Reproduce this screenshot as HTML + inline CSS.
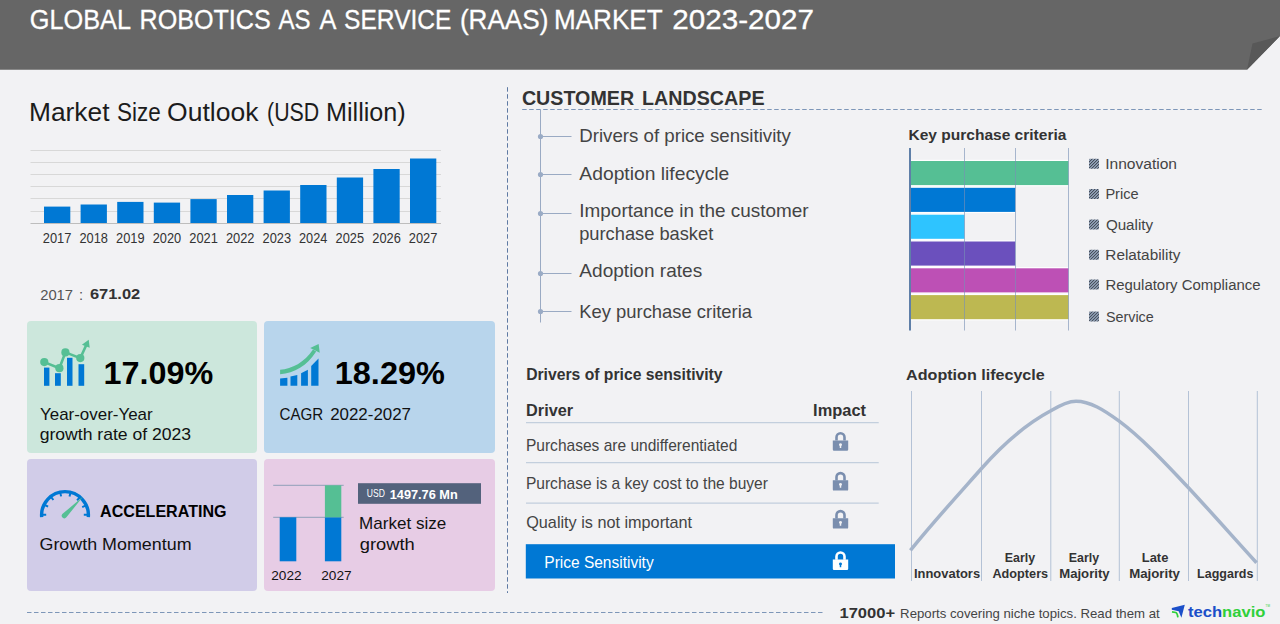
<!DOCTYPE html>
<html lang="en">
<head>
<meta charset="utf-8">
<title>Global Robotics as a Service (RaaS) Market 2023-2027</title>
<style>
html,body{margin:0;padding:0;background:#f2f2f4;}
body{width:1280px;height:624px;overflow:hidden;font-family:"Liberation Sans",Arial,sans-serif;}
svg{display:block;font-family:"Liberation Sans",Arial,sans-serif;}
text{white-space:pre;}
</style>
</head>
<body>
<svg width="1280" height="624" viewBox="0 0 1280 624">
<defs>
<pattern id="hatch" width="2.12" height="2.12" patternUnits="userSpaceOnUse" patternTransform="rotate(-45)">
<rect width="2.12" height="2.12" fill="#bccfea"/><rect width="2.12" height="1.15" fill="#363d47"/>
</pattern>
</defs>

<rect width="1280" height="624" fill="#f2f2f4"/>
<!-- header band -->
<path d="M0 0H1280V36L1247 69.8H0z" fill="#666"/>
<path d="M1247 69.8L1252.5 43.5L1280 36z" fill="#585858"/>
<text x="29.83" y="29" font-size="27" fill="#fff" textLength="101.21" lengthAdjust="spacingAndGlyphs" stroke="#fff" stroke-width=".3">GLOBAL</text>
<text x="139.54" y="29" font-size="27" fill="#fff" textLength="131.21" lengthAdjust="spacingAndGlyphs" stroke="#fff" stroke-width=".3">ROBOTICS</text>
<text x="278.55" y="29" font-size="27" fill="#fff" textLength="32.05" lengthAdjust="spacingAndGlyphs" stroke="#fff" stroke-width=".3">AS</text>
<text x="319.55" y="29" font-size="27" fill="#fff" textLength="16.9" lengthAdjust="spacingAndGlyphs" stroke="#fff" stroke-width=".3">A</text>
<text x="344.08" y="29" font-size="27" fill="#fff" textLength="107.37" lengthAdjust="spacingAndGlyphs" stroke="#fff" stroke-width=".3">SERVICE</text>
<text x="459.88" y="29" font-size="27" fill="#fff" textLength="88.54" lengthAdjust="spacingAndGlyphs" stroke="#fff" stroke-width=".3">(RAAS)</text>
<text x="554.06" y="29" font-size="27" fill="#fff" textLength="108.53" lengthAdjust="spacingAndGlyphs" stroke="#fff" stroke-width=".3">MARKET</text>
<text x="672.31" y="29" font-size="27" fill="#fff" textLength="141.68" lengthAdjust="spacingAndGlyphs" stroke="#fff" stroke-width=".3">2023-2027</text>
<!-- market size outlook -->
<text x="29.04" y="120.6" font-size="25" fill="#1c1c1c" textLength="80.45" lengthAdjust="spacingAndGlyphs">Market</text>
<text x="117.08" y="120.6" font-size="25" fill="#1c1c1c" textLength="43.72" lengthAdjust="spacingAndGlyphs">Size</text>
<text x="167.04" y="120.6" font-size="25" fill="#1c1c1c" textLength="91.42" lengthAdjust="spacingAndGlyphs">Outlook</text>
<text x="267.08" y="120.6" font-size="25" fill="#1c1c1c" textLength="52.14" lengthAdjust="spacingAndGlyphs">(USD</text>
<text x="326.03" y="120.6" font-size="25" fill="#1c1c1c" textLength="79.73" lengthAdjust="spacingAndGlyphs">Million)</text>
<rect x="30.5" y="150" width="410.5" height="1" fill="#d8d8d8"/>
<rect x="30.5" y="162" width="410.5" height="1" fill="#d8d8d8"/>
<rect x="30.5" y="174" width="410.5" height="1" fill="#d8d8d8"/>
<rect x="30.5" y="186" width="410.5" height="1" fill="#d8d8d8"/>
<rect x="30.5" y="198" width="410.5" height="1" fill="#d8d8d8"/>
<rect x="30.5" y="211" width="410.5" height="1" fill="#d8d8d8"/>
<rect x="30.5" y="223" width="410.5" height="1" fill="#bdbdbd"/>
<rect x="44.0" y="206.6" width="26.3" height="16.4" fill="#0078d4"/>
<text x="42.8" y="242.8" font-size="13.8" fill="#333" textLength="28.59" lengthAdjust="spacingAndGlyphs">2017</text>
<rect x="80.6" y="204.5" width="26.3" height="18.5" fill="#0078d4"/>
<text x="79.51" y="242.8" font-size="13.8" fill="#333" textLength="28.5" lengthAdjust="spacingAndGlyphs">2018</text>
<rect x="117.2" y="201.9" width="26.3" height="21.1" fill="#0078d4"/>
<text x="116.0" y="242.8" font-size="13.8" fill="#333" textLength="28.55" lengthAdjust="spacingAndGlyphs">2019</text>
<rect x="153.8" y="202.6" width="26.3" height="20.4" fill="#0078d4"/>
<text x="152.71" y="242.8" font-size="13.8" fill="#333" textLength="28.44" lengthAdjust="spacingAndGlyphs">2020</text>
<rect x="190.4" y="199.1" width="26.3" height="23.9" fill="#0078d4"/>
<text x="189.3" y="242.8" font-size="13.8" fill="#333" textLength="28.57" lengthAdjust="spacingAndGlyphs">2021</text>
<rect x="227.0" y="195" width="26.3" height="28.0" fill="#0078d4"/>
<text x="225.9" y="242.8" font-size="13.8" fill="#333" textLength="28.59" lengthAdjust="spacingAndGlyphs">2022</text>
<rect x="263.6" y="190.5" width="26.3" height="32.5" fill="#0078d4"/>
<text x="262.51" y="242.8" font-size="13.8" fill="#333" textLength="28.51" lengthAdjust="spacingAndGlyphs">2023</text>
<rect x="300.2" y="185" width="26.3" height="38.0" fill="#0078d4"/>
<text x="299.01" y="242.8" font-size="13.8" fill="#333" textLength="28.31" lengthAdjust="spacingAndGlyphs">2024</text>
<rect x="336.8" y="177.5" width="26.3" height="45.5" fill="#0078d4"/>
<text x="335.61" y="242.8" font-size="13.8" fill="#333" textLength="28.48" lengthAdjust="spacingAndGlyphs">2025</text>
<rect x="373.4" y="169" width="26.3" height="54.0" fill="#0078d4"/>
<text x="372.31" y="242.8" font-size="13.8" fill="#333" textLength="28.51" lengthAdjust="spacingAndGlyphs">2026</text>
<rect x="410.0" y="158.5" width="26.3" height="64.5" fill="#0078d4"/>
<text x="408.8" y="242.8" font-size="13.8" fill="#333" textLength="28.59" lengthAdjust="spacingAndGlyphs">2027</text>
<text x="40.16" y="299.5" font-size="14.8" fill="#555" textLength="32.89" lengthAdjust="spacingAndGlyphs">2017</text>
<text x="78.9" y="299.5" font-size="14.8" fill="#555">:</text>
<text x="89.9" y="299.4" font-size="15.2" font-weight="700" fill="#333" textLength="50.36" lengthAdjust="spacingAndGlyphs">671.02</text>
<!-- stat cards -->
<rect x="27" y="321" width="230" height="132" rx="4" fill="#cce7dc"/>
<rect x="264" y="321" width="231" height="132" rx="4" fill="#b8d5ec"/>
<rect x="27" y="459" width="230" height="132" rx="4" fill="#d1cce8"/>
<rect x="264" y="459" width="231" height="132" rx="4" fill="#e7cce5"/>
<g fill="#0078d4"><rect x="44" y="367.6" width="5.4" height="18.2"/><rect x="55" y="373.2" width="5.8" height="12.6"/><rect x="67" y="357.8" width="5.5" height="28"/><rect x="78.5" y="364.2" width="5.7" height="21.6"/></g>
<g fill="#55bf94" stroke="#55bf94"><path d="M44.3 362.1L59.4 368.2L65.4 352.4L80.3 358.1L86.2 345.2" fill="none" stroke-width="2.6"/><g stroke="none"><circle cx="44.3" cy="362.1" r="4.1"/><circle cx="59.4" cy="368.2" r="4.1"/><circle cx="65.4" cy="352.4" r="4.1"/><circle cx="80.3" cy="358.1" r="4.1"/><path d="M88.7 339.8L89.7 347.8L81.9 344.7z"/></g></g>
<text x="103.56" y="384.2" font-size="32" font-weight="700" fill="#000" textLength="109.69" lengthAdjust="spacingAndGlyphs">17.09%</text>
<text x="40.03" y="419.6" font-size="15.7" fill="#111" textLength="112.65" lengthAdjust="spacingAndGlyphs">Year-over-Year</text>
<text x="39.66" y="439.8" font-size="15.7" fill="#111" textLength="151.51" lengthAdjust="spacingAndGlyphs">growth rate of 2023</text>
<g fill="#0078d4"><path d="M280.1 378.5L287.4 377.7V385.8H280.1z"/><path d="M290.5 376.6L297.3 374.9V385.8H290.5z"/><path d="M301.1 373.2L307.9 369.8V385.8H301.1z"/><path d="M311.2 365.9L318.5 358.6V385.8H311.2z"/></g>
<g fill="#55bf94"><path d="M280.1 369.8C292 368.5 304.5 362.5 313 349.4L316.2 351.5C307 366 294.5 373 280.1 374.3z"/><path d="M310.2 347.9L318.6 343.9L319.7 352.7z"/></g>
<text x="334.76" y="384.2" font-size="32" font-weight="700" fill="#000" textLength="110.1" lengthAdjust="spacingAndGlyphs">18.29%</text>
<text x="279.53" y="419.6" font-size="15.7" fill="#111" textLength="43.77" lengthAdjust="spacingAndGlyphs">CAGR</text>
<text x="330.15" y="419.6" font-size="15.7" fill="#111" textLength="80.9" lengthAdjust="spacingAndGlyphs">2022-2027</text>
<g stroke="#0078d4" fill="none"><path d="M41.7 517.2A23.4 23.4 0 1 1 88.3 517.2" stroke-width="3.4"/>
<path d="M42.6 514.8L46.2 514.8M44.9 505.0L48.1 506.6M51.2 497.1L53.4 500.0M60.3 492.9L61.1 496.4M70.4 493.1L69.5 496.6M79.4 497.6L77.1 500.4M85.5 505.7L82.2 507.2M87.4 514.8L83.8 514.8" stroke-width="2"/></g>
<path d="M83.1 496.5L66.4 517.3A2.6 2.6 0 0 1 62.3 514.1z" fill="#55bf94"/>
<text x="100.1" y="516.8" font-size="16.5" font-weight="700" fill="#000" textLength="126.4" lengthAdjust="spacingAndGlyphs">ACCELERATING</text>
<text x="39.5" y="549.8" font-size="15.7" fill="#111" textLength="152.08" lengthAdjust="spacingAndGlyphs">Growth Momentum</text>
<rect x="273.2" y="484.8" width="70.5" height="1" fill="#8fa0b8"/><rect x="273.2" y="516.8" width="70.5" height="1" fill="#8fa0b8"/>
<rect x="279.7" y="517.3" width="16.6" height="44" fill="#0078d4"/><rect x="324.9" y="517.3" width="16.4" height="44" fill="#0078d4"/><rect x="324.9" y="485.3" width="16.4" height="32" fill="#55bf94"/>
<text x="271.21" y="579.8" font-size="13.5" fill="#111" textLength="30.37" lengthAdjust="spacingAndGlyphs">2022</text>
<text x="321.21" y="579.8" font-size="13.5" fill="#111" textLength="30.37" lengthAdjust="spacingAndGlyphs">2027</text>
<rect x="358" y="483.2" width="123" height="20.6" fill="#53627c"/>
<text x="366.84" y="497.2" font-size="10.2" fill="#fff" textLength="18.07" lengthAdjust="spacingAndGlyphs">USD</text>
<text x="389.7" y="498.8" font-size="13" font-weight="700" fill="#fff" textLength="68.1" lengthAdjust="spacingAndGlyphs">1497.76 Mn</text>
<text x="359.1" y="529.3" font-size="15.7" fill="#111" textLength="87.16" lengthAdjust="spacingAndGlyphs">Market size</text>
<text x="359.73" y="549.8" font-size="15.7" fill="#111" textLength="54.96" lengthAdjust="spacingAndGlyphs">growth</text>
<!-- dashed dividers -->
<path d="M507.5 87.2V593" stroke="#5f7aa3" stroke-width="1" stroke-dasharray="4.5 2.5" fill="none"/>
<path d="M27 612.5H822.5" stroke="#7d96b8" stroke-width="1" stroke-dasharray="4.5 2.5" fill="none"/>
<path d="M522.2 109.5H1263" stroke="#7d96b8" stroke-width="1" stroke-dasharray="4.5 2.5" fill="none"/>
<!-- customer landscape -->
<text x="521.89" y="105" font-size="20.5" font-weight="700" fill="#333" textLength="112.31" lengthAdjust="spacingAndGlyphs">CUSTOMER</text>
<text x="642.08" y="105" font-size="20.5" font-weight="700" fill="#333" textLength="122.49" lengthAdjust="spacingAndGlyphs">LANDSCAPE</text>
<g stroke="#9aaac3" stroke-width="1" fill="none"><path d="M540.5 110V322.5"/>
<path d="M540.5 136.5H571.5"/>
<path d="M540.5 174.5H571.5"/>
<path d="M540.5 213.5H571.5"/>
<path d="M540.5 273.5H571.5"/>
<path d="M540.5 311.5H571.5"/>
</g><g fill="#9aabc5">
<circle cx="540.5" cy="136.5" r="2.6"/>
<circle cx="540.5" cy="174.5" r="2.6"/>
<circle cx="540.5" cy="213.5" r="2.6"/>
<circle cx="540.5" cy="273.5" r="2.6"/>
<circle cx="540.5" cy="311.5" r="2.6"/>
</g>
<text x="579.27" y="142.3" font-size="18.5" fill="#444" textLength="211.57" lengthAdjust="spacingAndGlyphs">Drivers of price sensitivity</text>
<text x="579.36" y="180" font-size="18.5" fill="#444" textLength="149.99" lengthAdjust="spacingAndGlyphs">Adoption lifecycle</text>
<text x="579.35" y="217.2" font-size="18.5" fill="#444" textLength="229.16" lengthAdjust="spacingAndGlyphs">Importance in the customer</text>
<text x="579.22" y="239.6" font-size="18.5" fill="#444" textLength="134.01" lengthAdjust="spacingAndGlyphs">purchase basket</text>
<text x="579.36" y="276.7" font-size="18.5" fill="#444" textLength="122.83" lengthAdjust="spacingAndGlyphs">Adoption rates</text>
<text x="579.29" y="318.2" font-size="18.5" fill="#444" textLength="172.71" lengthAdjust="spacingAndGlyphs">Key purchase criteria</text>
<!-- key purchase criteria -->
<text x="908.46" y="139.9" font-size="15" font-weight="700" fill="#333" textLength="157.94" lengthAdjust="spacingAndGlyphs">Key purchase criteria</text>
<rect x="911" y="159.8" width="157.5" height="26.5" fill="#fff"/><rect x="911" y="161.0" width="157.5" height="24.1" fill="#55bf94"/>
<rect x="911" y="186.6" width="104.3" height="26.5" fill="#fff"/><rect x="911" y="187.8" width="104.3" height="24.1" fill="#0078d4"/>
<rect x="911" y="213.5" width="53.5" height="26.5" fill="#fff"/><rect x="911" y="214.7" width="53.5" height="24.1" fill="#2ec4ff"/>
<rect x="911" y="240.3" width="104.3" height="26.5" fill="#fff"/><rect x="911" y="241.5" width="104.3" height="24.1" fill="#6b50bd"/>
<rect x="911" y="267.1" width="157.5" height="26.5" fill="#fff"/><rect x="911" y="268.3" width="157.5" height="24.1" fill="#bd50b5"/>
<rect x="911" y="293.9" width="157.5" height="26.5" fill="#fff"/><rect x="911" y="295.1" width="157.5" height="24.1" fill="#bdb851"/>
<g fill="#7890b4" fill-opacity=".62">
<rect x="964" y="148" width="1" height="182.5"/>
<rect x="1015" y="148" width="1" height="182.5"/>
<rect x="1068" y="148" width="1" height="182.5"/>
</g><rect x="909" y="148" width="2" height="182.5" fill="#5f7fa8"/>
<rect x="1089" y="158.8" width="10" height="10" rx="1" fill="url(#hatch)"/>
<text x="1105.16" y="169.1" font-size="15.5" fill="#444" textLength="71.85" lengthAdjust="spacingAndGlyphs">Innovation</text>
<rect x="1089" y="189.1" width="10" height="10" rx="1" fill="url(#hatch)"/>
<text x="1105.4" y="199.4" font-size="15.5" fill="#444" textLength="33.25" lengthAdjust="spacingAndGlyphs">Price</text>
<rect x="1089" y="219.4" width="10" height="10" rx="1" fill="url(#hatch)"/>
<text x="1105.88" y="229.7" font-size="15.5" fill="#444" textLength="47.25" lengthAdjust="spacingAndGlyphs">Quality</text>
<rect x="1089" y="249.8" width="10" height="10" rx="1" fill="url(#hatch)"/>
<text x="1105.34" y="260.1" font-size="15.5" fill="#444" textLength="74.99" lengthAdjust="spacingAndGlyphs">Relatability</text>
<rect x="1089" y="279.6" width="10" height="10" rx="1" fill="url(#hatch)"/>
<text x="1105.38" y="289.9" font-size="15.5" fill="#444" textLength="155.19" lengthAdjust="spacingAndGlyphs">Regulatory Compliance</text>
<rect x="1089" y="311.4" width="10" height="10" rx="1" fill="url(#hatch)"/>
<text x="1105.95" y="321.7" font-size="15.5" fill="#444" textLength="47.79" lengthAdjust="spacingAndGlyphs">Service</text>
<!-- drivers of price sensitivity -->
<text x="526.15" y="380.2" font-size="15.8" font-weight="700" fill="#333" textLength="196.44" lengthAdjust="spacingAndGlyphs">Drivers of price sensitivity</text>
<text x="526.11" y="416" font-size="15.8" font-weight="700" fill="#333" textLength="46.93" lengthAdjust="spacingAndGlyphs">Driver</text>
<text x="813.1" y="416" font-size="15.8" font-weight="700" fill="#333" textLength="52.9" lengthAdjust="spacingAndGlyphs">Impact</text>
<g fill="#b7c6d8"><rect x="526" y="422.2" width="352.7" height="1"/><rect x="526" y="462.2" width="352.7" height="1"/><rect x="526" y="502.6" width="352.7" height="1"/></g>
<text x="525.93" y="450.6" font-size="15.9" fill="#444" textLength="211.38" lengthAdjust="spacingAndGlyphs">Purchases are undifferentiated</text>
<text x="525.92" y="488.8" font-size="15.9" fill="#444" textLength="242.03" lengthAdjust="spacingAndGlyphs">Purchase is a key cost to the buyer</text>
<text x="526.23" y="528.2" font-size="15.9" fill="#444" textLength="165.89" lengthAdjust="spacingAndGlyphs">Quality is not important</text>
<rect x="525.8" y="544.2" width="369.2" height="34.3" fill="#0078d4"/>
<text x="544.33" y="567.8" font-size="15.9" fill="#fff" textLength="109.3" lengthAdjust="spacingAndGlyphs">Price Sensitivity</text>
<g transform="translate(840.5 432)" fill="#7a8eae"><path d="M-5.3 8.6V5.3a5.3 5.3 0 0 1 10.6 0V8.6h-2.6V5.3a2.7 2.7 0 0 0-5.4 0V8.6z"/><path fill-rule="evenodd" d="M-7.7 8.4h15.4v9.2a1.2 1.2 0 0 1-1.2 1.2h-13a1.2 1.2 0 0 1-1.2-1.2zM0 11.2a1.5 1.5 0 0 0-.75 2.8v2h1.5v-2A1.5 1.5 0 0 0 0 11.2z"/></g>
<g transform="translate(840.5 471.8)" fill="#7a8eae"><path d="M-5.3 8.6V5.3a5.3 5.3 0 0 1 10.6 0V8.6h-2.6V5.3a2.7 2.7 0 0 0-5.4 0V8.6z"/><path fill-rule="evenodd" d="M-7.7 8.4h15.4v9.2a1.2 1.2 0 0 1-1.2 1.2h-13a1.2 1.2 0 0 1-1.2-1.2zM0 11.2a1.5 1.5 0 0 0-.75 2.8v2h1.5v-2A1.5 1.5 0 0 0 0 11.2z"/></g>
<g transform="translate(840.5 509.8)" fill="#7a8eae"><path d="M-5.3 8.6V5.3a5.3 5.3 0 0 1 10.6 0V8.6h-2.6V5.3a2.7 2.7 0 0 0-5.4 0V8.6z"/><path fill-rule="evenodd" d="M-7.7 8.4h15.4v9.2a1.2 1.2 0 0 1-1.2 1.2h-13a1.2 1.2 0 0 1-1.2-1.2zM0 11.2a1.5 1.5 0 0 0-.75 2.8v2h1.5v-2A1.5 1.5 0 0 0 0 11.2z"/></g>
<g transform="translate(840.5 551.2)" fill="#fff"><path d="M-5.3 8.6V5.3a5.3 5.3 0 0 1 10.6 0V8.6h-2.6V5.3a2.7 2.7 0 0 0-5.4 0V8.6z"/><path fill-rule="evenodd" d="M-7.7 8.4h15.4v9.2a1.2 1.2 0 0 1-1.2 1.2h-13a1.2 1.2 0 0 1-1.2-1.2zM0 11.2a1.5 1.5 0 0 0-.75 2.8v2h1.5v-2A1.5 1.5 0 0 0 0 11.2z"/></g>
<!-- adoption lifecycle -->
<text x="906.1" y="379.9" font-size="15.5" font-weight="700" fill="#333" textLength="138.65" lengthAdjust="spacingAndGlyphs">Adoption lifecycle</text>
<g fill="#b4c2d6">
<rect x="911" y="391" width="1" height="190"/>
<rect x="981" y="391" width="1" height="190"/>
<rect x="1050.3" y="391" width="1" height="190"/>
<rect x="1118.8" y="391" width="1" height="190"/>
<rect x="1188" y="391" width="1" height="190"/>
<rect x="1256.8" y="391" width="1" height="190"/>
</g>
<path d="M910.4 550.4C935 520 958 495 981.5 468.5C1005 442 1028 423 1050.8 410.8C1062 404 1070 401.2 1076 401.2C1090 401.2 1104 410 1119.2 421.2C1143 439 1166 464 1188.5 487.7C1211 512 1234 538 1256.5 562.7" fill="none" stroke="#a5b4ca" stroke-width="3.5" stroke-linecap="butt"/>
<text x="913.99" y="578" font-size="13.5" font-weight="700" fill="#333" textLength="66.1" lengthAdjust="spacingAndGlyphs">Innovators</text>
<text x="1004.77" y="561.7" font-size="13.5" font-weight="700" fill="#333" textLength="30.29" lengthAdjust="spacingAndGlyphs">Early</text>
<text x="992.43" y="578" font-size="13.5" font-weight="700" fill="#333" textLength="55.74" lengthAdjust="spacingAndGlyphs">Adopters</text>
<text x="1068.77" y="561.7" font-size="13.5" font-weight="700" fill="#333" textLength="30.29" lengthAdjust="spacingAndGlyphs">Early</text>
<text x="1059.22" y="578" font-size="13.5" font-weight="700" fill="#333" textLength="50.35" lengthAdjust="spacingAndGlyphs">Majority</text>
<text x="1141.78" y="561.7" font-size="13.5" font-weight="700" fill="#333" textLength="26.61" lengthAdjust="spacingAndGlyphs">Late</text>
<text x="1129.21" y="578" font-size="13.5" font-weight="700" fill="#333" textLength="50.76" lengthAdjust="spacingAndGlyphs">Majority</text>
<text x="1197.11" y="578" font-size="13.5" font-weight="700" fill="#333" textLength="56.25" lengthAdjust="spacingAndGlyphs">Laggards</text>
<!-- footer -->
<text x="839.46" y="617.8" font-size="15.5" font-weight="700" fill="#333" textLength="55.71" lengthAdjust="spacingAndGlyphs">17000+</text>
<text x="900.12" y="617.8" font-size="13.1" fill="#444" textLength="259.58" lengthAdjust="spacingAndGlyphs">Reports covering niche topics. Read them at</text>
<path d="M1171.8 607.9L1184.8 604.8L1181.4 617.8L1178.7 611.2L1171.8 609.7z" fill="#1b4fc9"/><path d="M1172 611.9L1175.8 612.5Q1177.3 613 1177.9 617.3" fill="none" stroke="#2fd03a" stroke-width="1.7"/>
<text x="1188" y="616.9" font-size="15.4" font-weight="700" textLength="77.4" lengthAdjust="spacingAndGlyphs"><tspan fill="#1b4fc9">tech</tspan><tspan fill="#2fd03a">navio</tspan></text>
<text x="1265.6" y="606.5" font-size="3" fill="#2fd03a">TM</text>
</svg>
</body>
</html>
